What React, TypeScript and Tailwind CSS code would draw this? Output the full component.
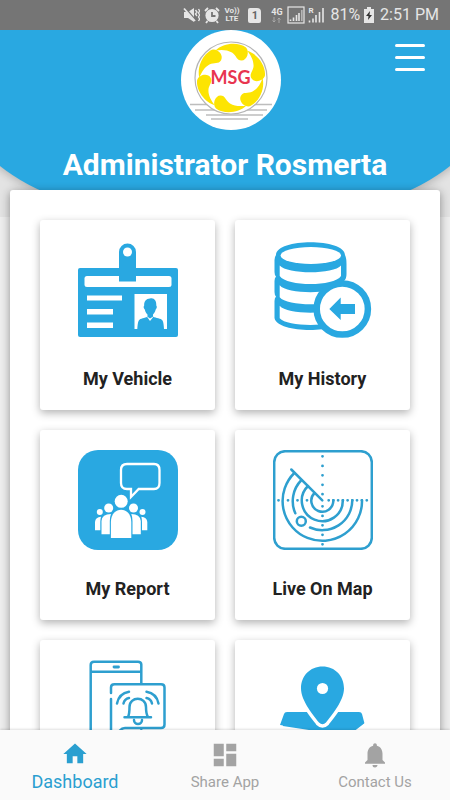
import type { ReactNode } from "react";
import { MdDashboard, MdHome, MdNotifications } from "react-icons/md";

const BLUE = "#29a8e1";
const LINE = "#2e9fcf";

function StatusBar() {
  return (
    <div className="relative z-10 flex h-[30px] shrink-0 items-center justify-end bg-[#757575] pr-[11px] text-[16px] leading-[20px] text-[#e6e6e6]">
      <svg className="mr-[4px] h-[18px] w-[17px]" viewBox="0 0 17 18" fill="none" stroke="#e6e6e6">
        <path d="M1 6h4l6-4v14l-6-4H1z" fill="#e6e6e6" stroke="none" />
        <path d="M2 2l11 13" stroke="#757575" strokeWidth="2" />
        <path d="M1 2.500l11 12.500" strokeWidth="1.800" />
        <path d="M12.500 4l1.500 2l-1.500 2l1.500 2M15.500 3l1.200 2l-1.200 2l1.200 2l-1.200 2l1.200 2l-1.200 2" strokeWidth="1.400" />
      </svg>
      <svg className="mr-[4px] h-[18px] w-[16px]" viewBox="0 0 16 18">
        <circle cx="8" cy="9.500" r="6.600" fill="#e6e6e6" />
        <path d="M1 5l3-3M15 5l-3-3M3.500 15l-1.500 2M12.500 15l1.500 2" stroke="#e6e6e6" strokeWidth="1.800" />
        <path d="M8 6v4h3.500" stroke="#757575" strokeWidth="1.800" fill="none" />
      </svg>
      <span className="mr-[9px] w-[15px] text-center text-[8px] leading-[8px] font-bold">
        Vo)) LTE
      </span>
      <span className="mr-[9px] flex h-[15px] w-[13px] items-center justify-center rounded-[2px] rounded-tr-[4px] bg-[#e6e6e6] text-[11px] leading-[15px] font-bold text-[#666]">
        1
      </span>
      <span className="mr-[4px] flex w-[13px] flex-col items-center text-[9px] leading-[9px] font-bold">
        4G
        <svg className="h-[6px] w-[9px]" viewBox="0 0 9 6" fill="none" stroke="#a8a8a8">
          <path d="M2 0v5M.5 3.500L2 5l1.500-1.500M7 6V1M5.500 2.500L7 1l1.500 1.500" />
        </svg>
      </span>
      <svg className="mr-[3px] h-[18px] w-[18px]" viewBox="0 0 18 18">
        <rect x="1" y="1" width="16" height="16" fill="none" stroke="#e6e6e6" strokeWidth="1.200" />
        <path d="M3.500 15v-1.500M6.500 15v-3.500M9.500 15V9M12 15V7" stroke="#e6e6e6" strokeWidth="1.600" />
        <path d="M14.800 15V4" stroke="#b5b5b5" strokeWidth="1.600" />
      </svg>
      <span className="relative mr-[6px] h-[18px] w-[16px]">
        <span className="absolute top-0 left-0 text-[8px] leading-[9px] font-bold">R</span>
        <svg className="h-[18px] w-[16px]" viewBox="0 0 16 18" stroke="#e6e6e6" strokeWidth="1.600">
          <path d="M1.500 16.500v-2M5 16.500v-4M8 16.500V9M11.500 16.500V6M15 16.500V2" />
        </svg>
      </span>
      <span className="mr-[4px]">81%</span>
      <svg className="mr-[6px] h-[16px] w-[10px]" viewBox="0 0 10 16">
        <path d="M3 0h4v2h3v14H0V2h3z" fill="#e6e6e6" />
        <path d="M6 4L2 9h2.500L4 13l4-5H5.500z" fill="#333" />
      </svg>
      <span>2:51 PM</span>
    </div>
  );
}

function Logo() {
  return (
    <div className="h-[100px] w-[100px] rounded-full bg-white">
      <svg className="h-full w-full" viewBox="0 0 100 100" role="img" aria-label="MSG">
        <path d="M9 74.500h82M14 80h72M25 85h57M30 89h37" stroke="#bdbdbd" strokeWidth="1.500" />
        <circle cx="50" cy="48" r="36" fill="#fff" stroke="#b5b5b5" strokeWidth="1.200" />
        {[0, 60, 120, 180, 240, 300].map((angle) => (
          <path
            key={angle}
            transform={`rotate(${angle} 50 48)`}
            d="M34.500 20.500C42 13 57 11.500 65 17.500C69 22 66 30.500 60.500 30.500C55.500 30.500 55.500 25.500 51 22.500C46 19.500 40 19.500 34.500 20.500Z"
            fill="#fde402"
          />
        ))}
        <text
          x="49.500"
          y="53.500"
          textAnchor="middle"
          fontFamily="Lato, sans-serif"
          fontSize="18"
          fontWeight="700"
          fill="#e8354f"
        >
          MSG
        </text>
      </svg>
    </div>
  );
}

function VehicleIcon() {
  return (
    <svg className="h-[100px] w-[100px]" viewBox="0 0 100 100" fill="#fff" aria-hidden="true">
      <rect x="0" y="28" width="100" height="69" rx="2" fill={BLUE} />
      <rect x="6.500" y="36" width="87" height="11" rx="2.500" />
      <path d="M41 41.500V12a8.500 8.500 0 0 1 17 0v29.500z" fill={BLUE} />
      <circle cx="49.500" cy="12" r="4.500" />
      <path d="M9 55.500h35v5H9zM9 69h26v5.500H9zM9 82.500h26v5.500H9zM56.500 54H89v35H56.500z" />
      <path
        d="M72 58.500c4-1 6.500 2 6.300 7c1 1 .5 3-.6 4c-.7 3-2 4-2.700 5v2c3 2 8 1.500 9.500 4c1 2 1.200 4.500 1.500 8.500H59.300c.3-4 .5-6.500 1.500-8.500c1.500-2.500 6-2 8.700-4v-2c-1-1-2-2-2.700-5c-1.200-1-1.600-3-.6-4c-.3-4 2-7 5.800-7z"
        fill={BLUE}
      />
      <path d="M68.500 76l3.500 2.500l4-2.500l-4 5z" />
    </svg>
  );
}

function HistoryIcon() {
  return (
    <svg className="h-[100px] w-[100px]" viewBox="0 0 100 100" fill="#fff" aria-hidden="true">
      <path
        d="M3 15C3 -2 72 -2 72 15Q73.500 18 73.500 24V34Q73.500 39 71 41V78C70 94 4 94 1.500 78V61Q1.500 58 3 56.500Q1.500 55 1.500 52V41Q1.500 38 3 36.500Q1.500 35 1.500 32V20Q1.500 17 3 15Z"
        fill={BLUE}
      />
      <ellipse cx="37.800" cy="15.500" rx="30.200" ry="8.500" />
      <path d="M6.700 25.500C14 34.500 61 34.500 68 25.500V36C61 46.700 14 46.700 6.700 36ZM6.700 45.300C14 54.600 61 54.600 68 45.300V57.300C61 66.700 14 66.700 6.700 57.300ZM6.700 65.700C14 75 61 75 68 65.700V78.300C61 87.200 14 87.200 6.700 78.300Z" />
      <circle cx="69.300" cy="69" r="25.600" stroke={BLUE} strokeWidth="6.500" />
      <path d="M56.300 69L67.700 57.500V64H82V74H67.700V80Z" fill={BLUE} />
    </svg>
  );
}

function ReportIcon() {
  return (
    <svg className="h-[100px] w-[100px]" viewBox="0 0 100 100" fill="#fff" aria-hidden="true">
      <rect width="100" height="100" rx="20" fill={BLUE} />
      <path
        d="M49 14H76Q81.500 14 81.500 20V33Q81.500 39 76 39H60.700L53 47V39H49Q43 39 43 33V20Q43 14 49 14Z"
        fill="none"
        stroke="#fff"
        strokeWidth="2.300"
      />
      <circle cx="43.200" cy="51.300" r="6.500" />
      <circle cx="30.700" cy="58" r="4.500" />
      <circle cx="55.500" cy="58" r="4.500" />
      <circle cx="21.800" cy="62" r="3" />
      <circle cx="64.500" cy="62" r="3" />
      <path d="M32.900 88V72C32.900 55.500 53.300 55.500 53.300 72V88Z" />
      <path d="M31.800 84.300H23.500V71Q24 64 33 64Q31.800 67 31.800 71ZM54.500 84.300H62.800V71Q62 64 53.300 64Q54.500 67 54.500 71Z" />
      <path d="M22.300 80.300H17V72Q17.500 67 23 66.700Q22.300 69 22.300 72ZM64 80.300H69.300V72Q68.800 67 63.300 66.700Q64 69 64 72Z" />
    </svg>
  );
}

function RadarIcon() {
  return (
    <svg
      className="h-[100px] w-[100px]"
      viewBox="0 0 100 100"
      fill="none"
      stroke={LINE}
      strokeWidth="2.500"
      strokeLinecap="round"
      aria-hidden="true"
    >
      <rect x="1.200" y="1.200" width="97.600" height="97.600" rx="11" />
      <path d="M18.300 19.500L49.300 50.300" />
      <path d="M21.300 23A39.700 39.700 0 1 0 89 50.300" />
      <path d="M28.500 30A30 30 0 0 0 22.300 63.300M37 77.500A30 30 0 0 0 79.300 50.300" />
      <path d="M35 36A20.500 20.500 0 1 0 69.800 50.300M41.500 43A11 11 0 1 0 60.300 50.300" />
      <circle cx="28.300" cy="71.300" r="4.500" />
      <path
        d="M49.500 6.300h.01M49.500 15.900h.01M49.500 25.300h.01M49.500 34.800h.01M49.500 44.200h.01M49.500 56.300h.01M49.500 65.900h.01M49.500 75.300h.01M49.500 84.800h.01M49.500 94.300h.01M5.500 50.300h.01M15 50.300h.01M24.500 50.300h.01M34 50.300h.01M55.700 50.300h.01M60.400 50.300h.01M65.100 50.300h.01M69.900 50.300h.01M74.600 50.300h.01M79.300 50.300h.01M84 50.300h.01M88.800 50.300h.01M93.800 50.300h.01"
        strokeWidth="2.800"
      />
    </svg>
  );
}

function AlertIcon() {
  return (
    <svg
      className="h-[100px] w-[100px]"
      viewBox="0 0 100 100"
      fill="none"
      stroke={LINE}
      strokeWidth="2.500"
      strokeLinecap="round"
      aria-hidden="true"
    >
      <path d="M63.300 23.500V4.500Q63.300 1.700 60 1.700H16Q12.700 1.700 12.700 5V95Q12.700 98 16 98H60Q63.300 98 63.300 95V70M12.700 11.700H63.300" />
      <path d="M36 7h4.500" strokeWidth="2.800" />
      <path d="M33 33V27.500Q33 24.300 36.500 24.300H83Q86.500 24.300 86.500 27.500V64.500Q86.500 68 83 68H47Q43 68 40 73L33 80V39" />
      <path d="M46.500 57.300H73M50 57Q51.500 54 51.500 47C51.500 36 68 36 68 47Q68 54 70 57M56 60A4 4 0 0 0 64 60" />
      <path d="M39 43.500Q41 33.500 51 31.800M45.500 43.500Q46.500 39 51 38M80.500 43.500Q78.500 33.500 68.500 31.800M74 43.500Q73 39 68.500 38" />
    </svg>
  );
}

function MapIcon() {
  return (
    <svg className="h-[100px] w-[100px]" viewBox="0 0 100 100" fill={BLUE} aria-hidden="true">
      <path d="M14 52H86Q88.500 52 89 54L91.500 63.500L84 70L99 92Q100 98 95 98H5Q0 98 1 92L10 65.500L7 65L11 54Q11.500 52 14 52Z" />
      <path d="M0 64.500L36 70L34 76L-2 74Z" fill="#fff" />
      <path d="M82 71.500L93 63" stroke="#fff" strokeWidth="1.500" />
      <path
        d="M49.500 6.500C62 6.500 71 16 71 28.500C71 41 58 56 53 62.500Q49.500 66 46 62.500C41 56 28 41 28 28.500C28 16 37 6.500 49.500 6.500Z"
        stroke="#fff"
        strokeWidth="7"
      />
      <path d="M49.500 6.500C62 6.500 71 16 71 28.500C71 41 58 56 53 62.500Q49.500 66 46 62.500C41 56 28 41 28 28.500C28 16 37 6.500 49.500 6.500Z" />
      <circle cx="49.500" cy="28.500" r="5.600" fill="#fff" />
    </svg>
  );
}

function Tile({ label, name, children }: { label?: string; name?: string; children: ReactNode }) {
  return (
    <button
      type="button"
      aria-label={name}
      className="flex h-[190px] flex-col items-center gap-[27px] rounded-[3px] bg-white pt-[20px] text-[18px] leading-[24px] font-bold text-[#222] shadow-[0_3px_8px_rgba(0,0,0,0.3)]"
    >
      {children}
      {label && <span>{label}</span>}
    </button>
  );
}

function Tab({ label, active, children }: { label: string; active?: boolean; children: ReactNode }) {
  return (
    <a
      href="#"
      aria-current={active ? "page" : undefined}
      className={
        active
          ? "flex flex-1 flex-col items-center text-[18px] leading-[24px] text-[#2a9fd0]"
          : "flex flex-1 flex-col items-center text-[15px] leading-[24px] text-[#a3a3a3]"
      }
    >
      <span className="flex h-[30px] items-start">{children}</span>
      <span>{label}</span>
    </a>
  );
}

export default function App() {
  return (
    <div className="flex h-screen flex-col overflow-hidden bg-[#eeeeee] font-[Roboto,sans-serif]">
      <StatusBar />
      <main className="min-h-0 flex-1 overflow-hidden">
        <header className="-mt-[30px] h-[217px] overflow-hidden bg-[#e3e3e3]">
          <div className="-mx-[72px] flex h-[207px] flex-col items-center rounded-b-[190px] bg-[#29a8e1] px-[72px] pt-[30px] shadow-[0_3px_8px_rgba(0,0,0,0.2)]">
            <div className="flex w-full items-start px-[25px]">
              <span className="flex-1" />
              <div className="ml-[12px]">
                <Logo />
              </div>
              <div className="flex flex-1 justify-end pt-[14px]">
                <button type="button" aria-label="Menu" className="flex w-[30px] flex-col gap-[9px]">
                  <span className="h-[3px] rounded-full bg-white" />
                  <span className="h-[3px] rounded-full bg-white" />
                  <span className="h-[3px] rounded-full bg-white" />
                </button>
              </div>
            </div>
            <h1 className="mt-[17px] text-[30px] leading-[36px] font-bold whitespace-nowrap text-white">
              Administrator Rosmerta
            </h1>
          </div>
        </header>
        <section className="relative mx-[10px] -mt-[27px] rounded-[3px] bg-white p-[30px] shadow-[0_2px_10px_rgba(0,0,0,0.4)]">
          <div className="grid grid-cols-2 gap-[20px]">
            <Tile label="My Vehicle">
              <VehicleIcon />
            </Tile>
            <Tile label="My History">
              <HistoryIcon />
            </Tile>
            <Tile label="My Report">
              <ReportIcon />
            </Tile>
            <Tile label="Live On Map">
              <RadarIcon />
            </Tile>
            <Tile name="Alerts">
              <AlertIcon />
            </Tile>
            <Tile name="Location">
              <MapIcon />
            </Tile>
          </div>
        </section>
      </main>
      <nav className="relative flex h-[70px] shrink-0 bg-[#fafafa] pt-[10px] shadow-[0_-1px_2px_rgba(0,0,0,0.12)]">
        <Tab label="Dashboard" active>
          <MdHome className="h-[28px] w-[28px]" />
        </Tab>
        <Tab label="Share App">
          <MdDashboard className="h-[30px] w-[30px]" />
        </Tab>
        <Tab label="Contact Us">
          <MdNotifications className="h-[30px] w-[30px]" />
        </Tab>
      </nav>
    </div>
  );
}
